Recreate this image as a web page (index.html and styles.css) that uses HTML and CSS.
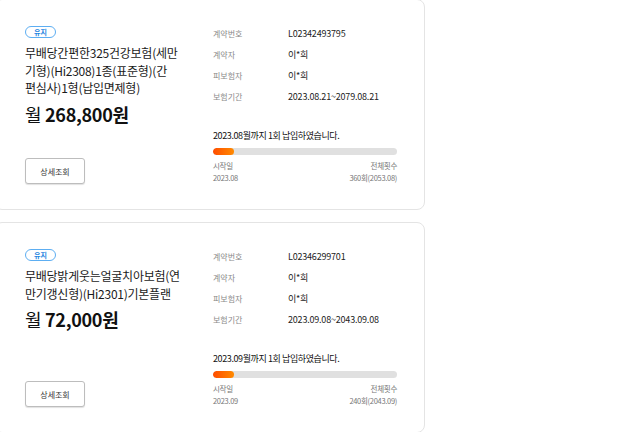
FILE: index.html
```html
<!DOCTYPE html>
<html>
<head>
    <meta charset="utf-8">
    <link rel="stylesheet" href="styles.css">
</head>
<body>
    <div class="contract-list">
        <div class="card">
            <div class="card-left">
                <span class="badge">유지</span>
                <div class="product-name">무배당간편한325건강보험(세만<br>기형)(Hi2308)1종(표준형)(간<br>편심사)1형(납입면제형)</div>
                <div class="price"><span class="price-unit">월</span> <b>268,800원</b></div>
                <button class="btn-detail">상세조회</button>
            </div>
            <div class="card-right">
                <div class="info-row"><span class="info-label">계약번호</span><span class="info-value">L02342493795</span></div>
                <div class="info-row"><span class="info-label">계약자</span><span class="info-value">이*희</span></div>
                <div class="info-row"><span class="info-label">피보험자</span><span class="info-value">이*희</span></div>
                <div class="info-row"><span class="info-label">보험기간</span><span class="info-value">2023.08.21~2079.08.21</span></div>
                <div class="pay-text">2023.08월까지 1회 납입하였습니다.</div>
                <div class="progress"><div class="progress-fill" style="width: 21px"></div></div>
                <div class="progress-meta">
                    <div class="meta-col">
                        <span>시작일</span>
                        <span>2023.08</span>
                    </div>
                    <div class="meta-col meta-right">
                        <span>전체횟수</span>
                        <span>360회(2053.08)</span>
                    </div>
                </div>
            </div>
        </div>

        <div class="card">
            <div class="card-left">
                <span class="badge">유지</span>
                <div class="product-name">무배당밝게웃는얼굴치아보험(연<br>만기갱신형)(Hi2301)기본플랜</div>
                <div class="price"><span class="price-unit">월</span> <b>72,000원</b></div>
                <button class="btn-detail">상세조회</button>
            </div>
            <div class="card-right">
                <div class="info-row"><span class="info-label">계약번호</span><span class="info-value">L02346299701</span></div>
                <div class="info-row"><span class="info-label">계약자</span><span class="info-value">이*희</span></div>
                <div class="info-row"><span class="info-label">피보험자</span><span class="info-value">이*희</span></div>
                <div class="info-row"><span class="info-label">보험기간</span><span class="info-value">2023.09.08~2043.09.08</span></div>
                <div class="pay-text">2023.09월까지 1회 납입하였습니다.</div>
                <div class="progress"><div class="progress-fill" style="width: 21px"></div></div>
                <div class="progress-meta">
                    <div class="meta-col">
                        <span>시작일</span>
                        <span>2023.09</span>
                    </div>
                    <div class="meta-col meta-right">
                        <span>전체횟수</span>
                        <span>240회(2043.09)</span>
                    </div>
                </div>
            </div>
        </div>
    </div>
</body>
</html>
```

FILE: styles.css
```css
/* page */
body {
    margin: 0;
    background: #fff;
    font-family: "Noto Sans CJK KR", "Noto Sans", sans-serif;
    color: #222;
}

/* list is scrolled a little, so the first card is clipped at top/left */
.contract-list {
    display: flex;
    flex-direction: column;
    gap: 12px;
    margin: -1px 0 0 -6px;
    width: 431px;
}

.card {
    display: flex;
    gap: 23px;
    padding: 23px 27px 25px 30px;
    border: 1px solid #e4e4e4;
    border-radius: 8px;
    background: #fff;
}

/* left: status, name, price, button */
.card-left {
    width: 165px;
    flex-shrink: 0;
    display: flex;
    flex-direction: column;
    align-items: flex-start;
}

.badge {
    margin-top: 3px;
    width: 29px;
    height: 10px;
    border: 1px solid #5daef2;
    border-radius: 7px;
    color: #1f86e0;
    font-size: 7px;
    font-weight: 700;
    line-height: 10px;
    text-align: center;
}

/* line breaks follow the original product name layout */
.product-name {
    margin-top: 6px;
    font-size: 12px;
    line-height: 17.5px;
    letter-spacing: -0.25px;
    white-space: nowrap;
    color: #1a1a1a;
}

.price {
    margin-top: 4px;
    font-size: 18px;
    line-height: 26px;
    letter-spacing: -0.3px;
    color: #111;
}

.price-unit {
    font-weight: 400;
}

.price b {
    font-weight: 700;
}

.btn-detail {
    margin-top: auto;
    width: 60px;
    height: 26px;
    padding: 0;
    border: 1px solid #bdbdbd;
    border-radius: 3px;
    background: #fff;
    box-shadow: 0 1px 1px rgba(0, 0, 0, 0.12);
    font-family: inherit;
    font-size: 8px;
    color: #333;
}

/* right: contract info + payment progress */
.card-right {
    flex: 1;
    display: flex;
    flex-direction: column;
}

.info-row {
    display: flex;
    height: 21px;
    align-items: center;
}

.info-label {
    width: 75px;
    font-size: 8px;
    color: #8a8a8a;
}

.info-value {
    font-size: 9px;
    letter-spacing: -0.2px;
    color: #222;
}

.pay-text {
    margin-top: 22px;
    font-size: 9px;
    line-height: 14px;
    letter-spacing: -0.4px;
    color: #111;
}

.progress {
    margin-top: 5px;
    height: 7px;
    border-radius: 4px;
    background: #e0e0e0;
    overflow: hidden;
}

.progress-fill {
    height: 100%;
    border-radius: 4px;
    background: linear-gradient(90deg, #ff4d00, #ff8a00);
}

.progress-meta {
    margin-top: 5px;
    display: flex;
    justify-content: space-between;
}

.meta-col {
    display: flex;
    flex-direction: column;
    font-size: 7.5px;
    line-height: 12px;
    letter-spacing: -0.3px;
    color: #777;
}

.meta-right {
    align-items: flex-end;
}
```
